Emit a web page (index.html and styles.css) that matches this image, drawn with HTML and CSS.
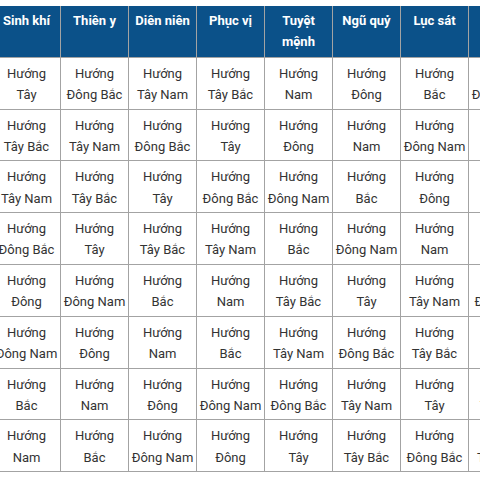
FILE: index.html
```html
<!DOCTYPE html>
<html lang="vi">
<head>
<meta charset="utf-8">
<link rel="stylesheet" href="styles.css">
</head>
<body>
<div class="wrap">
<table class="bt">
<thead>
<tr>
<th>Sinh khí</th><th>Thiên y</th><th>Diên niên</th><th>Phục vị</th><th>Tuyệt mệnh</th><th>Ngũ quỷ</th><th>Lục sát</th><th>Họa hại</th>
</tr>
</thead>
<tbody>
<tr><td>Hướng<br>Tây</td><td>Hướng<br>Đông Bắc</td><td>Hướng<br>Tây Nam</td><td>Hướng<br>Tây Bắc</td><td>Hướng<br>Nam</td><td>Hướng<br>Đông</td><td>Hướng<br>Bắc</td><td>Hướng<br>Đông Nam</td></tr>
<tr><td>Hướng<br>Tây Bắc</td><td>Hướng<br>Tây Nam</td><td>Hướng<br>Đông Bắc</td><td>Hướng<br>Tây</td><td>Hướng<br>Đông</td><td>Hướng<br>Nam</td><td>Hướng<br>Đông Nam</td><td>Hướng<br>Bắc</td></tr>
<tr><td>Hướng<br>Tây Nam</td><td>Hướng<br>Tây Bắc</td><td>Hướng<br>Tây</td><td>Hướng<br>Đông Bắc</td><td>Hướng<br>Đông Nam</td><td>Hướng<br>Bắc</td><td>Hướng<br>Đông</td><td>Hướng<br>Nam</td></tr>
<tr><td>Hướng<br>Đông Bắc</td><td>Hướng<br>Tây</td><td>Hướng<br>Tây Bắc</td><td>Hướng<br>Tây Nam</td><td>Hướng<br>Bắc</td><td>Hướng<br>Đông Nam</td><td>Hướng<br>Nam</td><td>Hướng<br>Đông</td></tr>
<tr><td>Hướng<br>Đông</td><td>Hướng<br>Đông Nam</td><td>Hướng<br>Bắc</td><td>Hướng<br>Nam</td><td>Hướng<br>Tây Bắc</td><td>Hướng<br>Tây</td><td>Hướng<br>Tây Nam</td><td>Hướng<br>Đông Bắc</td></tr>
<tr><td>Hướng<br>Đông Nam</td><td>Hướng<br>Đông</td><td>Hướng<br>Nam</td><td>Hướng<br>Bắc</td><td>Hướng<br>Tây Nam</td><td>Hướng<br>Đông Bắc</td><td>Hướng<br>Tây Bắc</td><td>Hướng<br>Tây</td></tr>
<tr><td>Hướng<br>Bắc</td><td>Hướng<br>Nam</td><td>Hướng<br>Đông</td><td>Hướng<br>Đông Nam</td><td>Hướng<br>Đông Bắc</td><td>Hướng<br>Tây Nam</td><td>Hướng<br>Tây</td><td>Hướng<br>Tây Bắc</td></tr>
<tr><td>Hướng<br>Nam</td><td>Hướng<br>Bắc</td><td>Hướng<br>Đông Nam</td><td>Hướng<br>Đông</td><td>Hướng<br>Tây</td><td>Hướng<br>Tây Bắc</td><td>Hướng<br>Đông Bắc</td><td>Hướng<br>Tây Nam</td></tr>
</tbody>
</table>
</div>
</body>
</html>
```
FILE: styles.css
```css
html, body {
  margin: 0;
  padding: 0;
  background: #fff;
}
.wrap {
  padding-top: 6px;
  overflow: hidden;
  width: 480px;
}
.bt {
  border-collapse: collapse;
  table-layout: fixed;
  width: 545px;
  margin-left: -8px;
  font-family: Roboto, "Liberation Sans", Arial, sans-serif;
  font-size: 13px;
  color: #333;
}
.bt th, .bt td {
  border: 1px solid #a3a3a3;
  text-align: center;
  vertical-align: top;
  padding: 5px 0 3.4px;
  line-height: 21.2px;
  white-space: nowrap;
}
.bt th {
  white-space: normal;
  padding: 4px 0 4.4px;
  background: #0b5189;
  color: #fff;
  font-weight: bold;
  border-top: none;
}
```
